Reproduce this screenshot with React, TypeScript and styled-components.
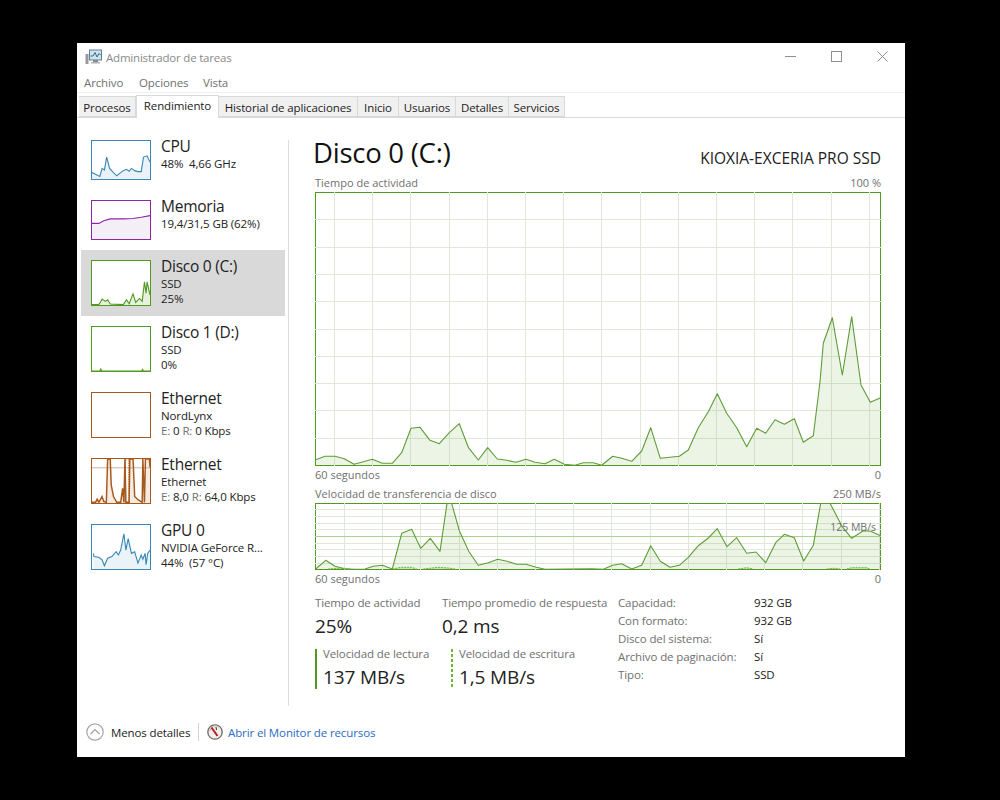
import React from "react";
import styled, { createGlobalStyle } from "styled-components";

const FONT = `"Open Sans", "Noto Sans", "Liberation Sans", sans-serif`;
const GREEN = "#4f9a1f";
const GREY = "#707070";

const Global = createGlobalStyle`
  html, body { margin: 0; padding: 0; background: #000; }
  body { font-family: ${FONT}; font-size: 11.5px; letter-spacing: -0.12px; color: #222; }
  * { box-sizing: border-box; }
`;

const Screen = styled.div`
  width: 1000px;
  height: 800px;
  padding: 43px 95px 43px 77px;
  background: #000;
`;
const Win = styled.div`
  height: 714px;
  background: #fff;
  display: flex;
  flex-direction: column;
`;
const TitleBar = styled.div`
  height: 27px;
  padding: 0 0 0 8px;
  display: flex;
  align-items: center;
  position: relative;
`;
const TitleText = styled.span`
  margin: 2px 0 0 4px;
  color: #8a8a8a;
  font-size: 11.5px;
  letter-spacing: -0.2px;
`;
const WinButtons = styled.div`
  margin-left: auto;
  display: flex;
  align-items: center;
`;
const WinButton = styled.div`
  width: 46px;
  height: 27px;
  display: flex;
  align-items: center;
  justify-content: center;
`;
const MenuBar = styled.div`
  height: 23px;
  display: flex;
  align-items: center;
  padding: 2px 0 0 7px;
  border-bottom: 1px solid #efefef;
`;
const MenuItem = styled.span<{ $w: number }>`
  width: ${(p) => p.$w}px;
  color: #707070;
  font-size: 11.5px;
`;
const TabBar = styled.div`
  height: 25px;
  padding: 3px 0 0 2px;
  display: flex;
  align-items: flex-end;
  border-bottom: 1px solid #d9d9d9;
`;
const Tab = styled.div<{ $w: number; $active?: boolean }>`
  width: ${(p) => p.$w}px;
  height: ${(p) => (p.$active ? 23 : 21)}px;
  margin-bottom: ${(p) => (p.$active ? -1 : 0)}px;
  background: ${(p) => (p.$active ? "#fff" : "#f0f0f0")};
  border: 1px solid #d9d9d9;
  border-left-width: ${(p) => (p.$active ? 1 : 0)}px;
  border-bottom: ${(p) => (p.$active ? "none" : "1px solid #d9d9d9")};
  display: flex;
  align-items: center;
  justify-content: center;
  padding-bottom: ${(p) => (p.$active ? 3 : 0)}px;
  padding-top: ${(p) => (p.$active ? 0 : 1)}px;
  font-size: 11.5px;
  color: #1c1c1c;
  white-space: nowrap;
  position: relative;
`;
const Body = styled.div`
  flex: 1;
  display: flex;
  min-height: 0;
`;
const Sidebar = styled.div`
  width: 207px;
  margin-left: 4px;
  padding-top: 12px;
  display: flex;
  flex-direction: column;
`;
const SideItem = styled.div<{ $h: number; $active?: boolean }>`
  height: ${(p) => p.$h}px;
  background: ${(p) => (p.$active ? "#d9d9d9" : "transparent")};
  width: 204px;
  padding: 10px 0 10px 10px;
  display: flex;
`;
const Spark = styled.div<{ $c: string }>`
  width: 60px;
  height: 100%;
  flex: none;
  background: #fff;
  border: 1px solid ${(p) => p.$c};
  overflow: hidden;
  svg { display: block; width: 100%; height: 100%; }
`;
const SideText = styled.div`
  margin: -4px 0 0 10px;
  min-width: 0;
`;
const SideName = styled.div`
  font-size: 15.5px;
  height: 20px;
  line-height: 21px;
  letter-spacing: -0.25px;
  color: #222;
`;
const SideSub = styled.div`
  font-size: 11.5px;
  line-height: 15px;
  color: #222;
  white-space: nowrap;
`;
const Faint = styled.span`
  color: ${GREY};
`;
const Divider = styled.div`
  width: 1px;
  height: 566px;
  margin-top: 22px;
  background: #dcdcdc;
`;
const Main = styled.div`
  flex: 1;
  padding: 17px 24px 0 24px;
  min-width: 0;
`;
const Heading = styled.div`
  height: 36px;
  display: flex;
  justify-content: space-between;
  align-items: center;
`;
const HeadTitle = styled.div`
  font-size: 27.5px;
  line-height: 38px;
  color: #111;
  letter-spacing: -0.25px;
`;
const HeadModel = styled.div`
  font-size: 15.5px;
  padding-top: 10px;
  letter-spacing: 0;
  color: #222;
`;
const AxisRow = styled.div<{ $top: number }>`
  margin-top: ${(p) => p.$top}px;
  margin-left: 2px;
  height: 14px;
  line-height: 14px;
  display: flex;
  justify-content: space-between;
  color: ${GREY};
  font-size: 11px;
  letter-spacing: 0;
`;
const Chart = styled.div<{ $h: number; $top: number }>`
  margin-left: 2px;
  margin-top: ${(p) => p.$top}px;
  height: ${(p) => p.$h}px;
  position: relative;
  border: 1px solid ${GREEN};
  svg { display: block; position: absolute; left: -1px; top: -1px; }
`;
const MidLabel = styled.span`
  position: absolute;
  right: 4px;
  top: 16px;
  color: ${GREY};
  font-size: 10.5px;
  letter-spacing: 0;
`;
const Stats = styled.div`
  margin-top: 8px;
  display: flex;
`;
const StatCols = styled.div`
  width: 305px;
  flex: none;
  padding-left: 2px;
`;
const StatRow = styled.div`
  display: grid;
  grid-template-columns: 127px 1fr;
`;
const StatWriteRow = styled(StatRow)`
  grid-template-columns: 136px 1fr;
  margin-top: 9px;
`;
const Label = styled.div`
  color: ${GREY};
  font-size: 11.5px;
  line-height: 18px;
  white-space: nowrap;
`;
const Value = styled.div`
  font-size: 19px;
  line-height: 28px;
  color: #222;
`;
const Bar = styled.div<{ $dotted?: boolean }>`
  height: 40px;
  padding-left: 8px;
  background-image: ${(p) =>
    p.$dotted
      ? "repeating-linear-gradient(to bottom, #6cb52d 0 3px, transparent 3px 5px)"
      : `linear-gradient(${GREEN}, ${GREEN})`};
  background-size: 2px 100%;
  background-repeat: no-repeat;
  ${Value} { line-height: 26px; }
  ${Label} { line-height: 12px; margin-top: -1px; margin-bottom: 4px; }
`;
const Props = styled.div`
  display: grid;
  grid-template-columns: 136px 1fr;
  grid-auto-rows: 18px;
  line-height: 18px;
`;
const PropVal = styled.div`
  font-size: 11.5px;
  color: #222;
`;
const Footer = styled.div`
  height: 50px;
  flex: none;
  display: flex;
  align-items: center;
  padding: 0 0 0 9px;
`;
const FooterText = styled.span`
  margin-left: 7px;
  font-size: 11.5px;
  color: #222;
  width: 79px;
  white-space: nowrap;
`;
const FooterSep = styled.div`
  width: 1px;
  height: 18px;
  margin: 0 8px;
  background: #d5d5d5;
`;
const FooterLink = styled.a`
  margin-left: 5px;
  font-size: 11.5px;
  color: #2a6cc4;
  white-space: nowrap;
`;

type Pt = [number, number];
const path = (p: Pt[]) => p.map(([x, y]) => `${x},${y}`).join(" ");
const scr = (ox: number, oy: number, pts: Pt[], cx: number, cy: number): Pt[] =>
  pts.map(([x, y]) => [+(ox + x / 3 - cx).toFixed(1), +(oy + y / 3 - cy).toFixed(1)]);

const active: Pt[] = [
  ...scr(300, 135, [[45,975],[75,964],[105,964],[133,971],[162,988],[190,980],[217,973],[247,985],[277,985],[305,953],[333,880],[360,877],[390,916],[418,926],[448,893],[478,866],[505,937],[535,975],[563,938],[592,972],[620,976],[648,982],[678,973],[705,982],[735,986],[763,973],[793,988],[825,991],[850,983],[880,983]], 315, 192),
  ...scr(600, 135, [[5,991],[38,964],[65,970],[95,979],[125,948],[152,878],[181,970],[210,967],[238,964],[265,945],[295,878],[325,830],[352,776],[380,835],[410,878],[440,935],[470,880],[497,895],[525,854],[553,868],[583,851],[610,922],[640,902],[660,740],[670,625],[697,548],[727,720],[755,545],[783,750],[811,802],[842,788]], 315, 192),
];
const transfer: Pt[] = [
  ...scr(305, 470, [[32,297],[62,271],[90,289],[118,296],[148,298],[180,297],[205,289],[232,286],[262,297],[290,190],[320,178],[347,235],[376,205],[405,244],[426,100],[440,100],[463,182],[492,245],[520,286],[550,278],[578,268],[606,274],[635,283],[663,283],[691,291],[720,298],[860,296],[895,298]], 315, 503),
  ...scr(600, 470, [[10,298],[38,286],[65,281],[95,297],[125,286],[152,227],[181,274],[210,292],[238,286],[265,262],[295,227],[325,204],[352,176],[381,230],[410,203],[440,250],[468,246],[497,278],[527,218],[553,193],[583,203],[611,273],[640,226],[662,100],[690,100],[727,170],[755,205],[790,182],[812,184],[842,197]], 315, 503),
];
const writes: Pt[][] = [
  scr(305, 470, [[70,297],[110,294],[135,297]], 315, 503),
  scr(305, 470, [[262,297],[290,292],[320,292],[335,297]], 315, 503),
  scr(305, 470, [[355,297],[400,292],[430,294],[450,297]], 315, 503),
  scr(600, 470, [[415,297],[440,293],[460,297]], 315, 503),
  scr(600, 470, [[680,297],[700,295],[720,297]], 315, 503),
  scr(600, 470, [[740,297],[755,293],[800,293],[810,297]], 315, 503),
];

function Grid({ w, h, xs, ys, strong }: { w: number; h: number; xs: number[]; ys: number[]; strong?: number }) {
  return (
    <g shapeRendering="crispEdges" strokeWidth={1}>
      {xs.map((x) => <line key={"x" + x} x1={x + 0.5} x2={x + 0.5} y1={0} y2={h} stroke="#e0e8da" />)}
      {ys.map((y) => <line key={"y" + y} y1={y + 0.5} y2={y + 0.5} x1={0} x2={w} stroke={y === strong ? "#add38f" : "#dfe9d6"} />)}
    </g>
  );
}

function Area({ pts, h, sw = 1.1 }: { pts: Pt[]; h: number; sw?: number }) {
  const first = pts[0];
  const last = pts[pts.length - 1];
  return (
    <>
      <polygon points={`${first[0]},${h} ${path(pts)} ${last[0]},${h}`} fill="#4f9a1f" fillOpacity={0.11} />
      <polyline points={path(pts)} fill="none" stroke="#5f9c38" strokeWidth={sw} strokeLinejoin="round" />
    </>
  );
}

const BIG_XS = Array.from({ length: 15 }, (_, k) => Math.round(19 + 38.2 * k));
const BIG_YS = Array.from({ length: 9 }, (_, k) => Math.round(27.3 * (k + 1)));
const MID_XS = Array.from({ length: 15 }, (_, k) => Math.round(29 + 38.2 * k));
const MID_YS = [6, 13, 20, 26, 33, 40, 46, 53, 60];

function BigChart() {
  return (
    <svg width={566} height={274} viewBox="0 0 566 274">
      <Grid w={566} h={274} xs={BIG_XS} ys={BIG_YS} />
      <Area pts={active} h={273} />
    </svg>
  );
}
function MidChart() {
  return (
    <svg width={566} height={67} viewBox="0 0 566 67">
      <Grid w={566} h={67} xs={MID_XS} ys={MID_YS} strong={33} />
      <Area pts={transfer} h={66} />
      {writes.map((w, i) => (
        <polyline key={i} points={path(w)} fill="#4f9a1f" fillOpacity={0.2} stroke="#6fb23f" strokeWidth={1} strokeDasharray="2 1" />
      ))}
    </svg>
  );
}

function Sparkline({ box, pts, c, fill, extra, sw = 3.4 }: { box: [number, number, number, number]; pts: Pt[]; c: string; fill: string; extra?: React.ReactNode; sw?: number }) {
  const [x0, y0, x1, y1] = box;
  return (
    <svg viewBox={`${x0} ${y0} ${x1 - x0} ${y1 - y0}`} preserveAspectRatio="none">
      {pts.length > 0 && <polygon points={`${pts[0][0]},${y1} ${path(pts)} ${pts[pts.length - 1][0]},${y1}`} fill={fill} />}
      {extra}
      {pts.length > 0 && <polyline points={path(pts)} fill="none" stroke={c} strokeWidth={sw} />}
    </svg>
  );
}

const BLUE = "#3a87b5";
const PURPLE = "#8e24a8";
const ORANGE = "#a7591c";
const cpu: Pt[] = [[34,128],[45,133],[58,140],[65,115],[72,120],[79,80],[88,115],[100,128],[110,138],[122,128],[130,122],[140,118],[148,124],[155,115],[165,122],[175,125],[185,125],[192,80],[203,76],[212,95]];
const mem: Pt[] = [[34,280],[55,280],[70,272],[90,266],[130,266],[160,265],[185,261],[212,256]];
const d0: Pt[] = [[34,525],[55,525],[65,508],[75,515],[82,510],[90,523],[130,525],[140,510],[148,522],[160,492],[168,518],[180,506],[188,515],[195,455],[200,490],[203,455],[212,495]];
const d1: Pt[] = [[34,155],[58,155],[61,149],[64,155],[186,155],[189,150],[192,155],[212,155]];
const eth: Pt[] = [[34,548],[45,548],[50,538],[55,548],[65,530],[70,545],[78,548],[82,415],[90,415],[93,495],[100,530],[110,548],[122,548],[128,505],[132,548],[135,415],[138,548],[148,548],[150,415],[160,415],[165,530],[175,540],[188,548],[190,415],[195,548],[198,415],[210,415],[212,440]];
const ethFaint: Pt[] = [[137,548],[137,415],[147,415],[147,548]];
const gpu: Pt[] = [[38,700],[40,710],[55,712],[65,720],[72,738],[82,715],[95,710],[108,695],[115,705],[122,690],[132,640],[138,690],[145,655],[155,700],[165,695],[175,730],[185,705],[190,718],[197,700],[200,735],[205,700],[212,690]];

function AppIcon() {
  return (
    <svg width={17} height={17} viewBox="0 0 17 17">
      <rect x="0.5" y="6" width="3" height="10" fill="#9a9a9a" />
      <rect x="4.5" y="2" width="12" height="10" fill="#cfe3ef" stroke="#5f7f95" />
      <polyline points="5.5,8 8,8 10,4.5 12,9 14,5.5 15.5,7" fill="none" stroke="#35688a" strokeWidth="1" />
      <rect x="8" y="12" width="5" height="2" fill="#8a8a8a" />
      <rect x="6" y="14" width="9" height="1.5" fill="#b3b3b3" />
    </svg>
  );
}
function Chevron() {
  return (
    <svg width={18} height={18} viewBox="0 0 18 18">
      <circle cx="9" cy="9" r="8.2" fill="#fff" stroke="#a6a6a6" strokeWidth="1.2" />
      <polyline points="4.5,11 9,6.5 13.5,11" fill="none" stroke="#a0a0a0" strokeWidth="1.2" />
    </svg>
  );
}
function Gauge() {
  return (
    <svg width={16} height={16} viewBox="0 0 16 16">
      <circle cx="8" cy="8" r="7.2" fill="#f4efe9" stroke="#6a6a6a" strokeWidth="1.3" />
      <path d="M3 7 A5.5 5.5 0 0 1 12 3" fill="none" stroke="#c9b9a5" strokeWidth="1" />
      <line x1="4.5" y1="3.5" x2="10.5" y2="12" stroke="#b3202a" strokeWidth="2" />
      <line x1="9" y1="3" x2="9.5" y2="6" stroke="#333" strokeWidth="1" />
    </svg>
  );
}

export default function App() {
  return (
    <Screen>
      <Global />
      <Win>
        <TitleBar>
          <AppIcon />
          <TitleText>Administrador de tareas</TitleText>
          <WinButtons>
            <WinButton>
              <svg width={11} height={11} viewBox="0 0 11 11"><line x1="0" x2="11" y1="5.5" y2="5.5" stroke="#8f8f8f" /></svg>
            </WinButton>
            <WinButton>
              <svg width={11} height={11} viewBox="0 0 11 11"><rect x="0.5" y="0.5" width="10" height="10" fill="none" stroke="#8f8f8f" /></svg>
            </WinButton>
            <WinButton>
              <svg width={11} height={11} viewBox="0 0 11 11"><path d="M0.5 0.5L10.5 10.5M10.5 0.5L0.5 10.5" stroke="#8f8f8f" fill="none" /></svg>
            </WinButton>
          </WinButtons>
        </TitleBar>
        <MenuBar>
          <MenuItem $w={55}>Archivo</MenuItem>
          <MenuItem $w={64}>Opciones</MenuItem>
          <MenuItem $w={40}>Vista</MenuItem>
        </MenuBar>
        <TabBar>
          <Tab $w={57}>Procesos</Tab>
          <Tab $w={83} $active>Rendimiento</Tab>
          <Tab $w={139}>Historial de aplicaciones</Tab>
          <Tab $w={41}>Inicio</Tab>
          <Tab $w={57}>Usuarios</Tab>
          <Tab $w={53}>Detalles</Tab>
          <Tab $w={56}>Servicios</Tab>
        </TabBar>
        <Body>
          <Sidebar>
            <SideItem $h={60}>
              <Spark $c={BLUE}><Sparkline box={[34,30,212,148]} pts={cpu} c={BLUE} fill="#e9f2f8" /></Spark>
              <SideText><SideName>CPU</SideName><SideSub>48%&nbsp; 4,66 GHz</SideSub></SideText>
            </SideItem>
            <SideItem $h={60}>
              <Spark $c={PURPLE}><Sparkline box={[34,211,212,328]} pts={mem} c={PURPLE} fill="#f4eff6" /></Spark>
              <SideText><SideName>Memoria</SideName><SideSub>19,4/31,5 GB (62%)</SideSub></SideText>
            </SideItem>
            <SideItem $h={66} $active>
              <Spark $c={GREEN}><Sparkline box={[34,391,212,526]} pts={d0} c={GREEN} fill="#e6f2dd" /></Spark>
              <SideText><SideName>Disco 0 (C:)</SideName><SideSub>SSD</SideSub><SideSub>25%</SideSub></SideText>
            </SideItem>
            <SideItem $h={66}>
              <Spark $c={GREEN}><Sparkline box={[34,19,212,155]} pts={d1} c={GREEN} fill="#e6f2dd" /></Spark>
              <SideText><SideName>Disco 1 (D:)</SideName><SideSub>SSD</SideSub><SideSub>0%</SideSub></SideText>
            </SideItem>
            <SideItem $h={66}>
              <Spark $c={ORANGE}><Sparkline box={[34,217,212,353]} pts={[]} c={ORANGE} fill="#fff" /></Spark>
              <SideText><SideName>Ethernet</SideName><SideSub>NordLynx</SideSub><SideSub><Faint>E:</Faint> 0 <Faint>R:</Faint> 0 Kbps</SideSub></SideText>
            </SideItem>
            <SideItem $h={66}>
              <Spark $c={ORANGE}>
                <Sparkline
                  box={[34,415,212,550]}
                  pts={eth}
                  c={ORANGE}
                  fill="#f7ece4"
                  sw={4.5}
                  extra={
                    <>
                      <line x1="34" x2="212" y1="442" y2="442" stroke="#b98a66" strokeWidth="2" />
                      <polyline points={path(ethFaint)} fill="none" stroke={ORANGE} strokeWidth="3" strokeDasharray="4 3" />
                    </>
                  }
                />
              </Spark>
              <SideText><SideName>Ethernet</SideName><SideSub>Ethernet</SideSub><SideSub><Faint>E:</Faint> 8,0 <Faint>R:</Faint> 64,0 Kbps</SideSub></SideText>
            </SideItem>
            <SideItem $h={66}>
              <Spark $c={BLUE}><Sparkline box={[34,613,212,748]} pts={gpu} c={BLUE} fill="#eaf3f8" /></Spark>
              <SideText><SideName>GPU 0</SideName><SideSub>NVIDIA GeForce R...</SideSub><SideSub>44%&nbsp; (57 °C)</SideSub></SideText>
            </SideItem>
          </Sidebar>
          <Divider />
          <Main>
            <Heading>
              <HeadTitle>Disco 0 (C:)</HeadTitle>
              <HeadModel>KIOXIA-EXCERIA PRO SSD</HeadModel>
            </Heading>
            <AxisRow $top={5}><span>Tiempo de actividad</span><span>100 %</span></AxisRow>
            <Chart $top={2} $h={274}><BigChart /></Chart>
            <AxisRow $top={2}><span>60 segundos</span><span>0</span></AxisRow>
            <AxisRow $top={5}><span>Velocidad de transferencia de disco</span><span>250 MB/s</span></AxisRow>
            <Chart $top={2} $h={67}><MidChart /><MidLabel>125 MB/s</MidLabel></Chart>
            <AxisRow $top={2}><span>60 segundos</span><span>0</span></AxisRow>
            <Stats>
              <StatCols>
                <StatRow>
                  <div><Label>Tiempo de actividad</Label><Value>25%</Value></div>
                  <div><Label>Tiempo promedio de respuesta</Label><Value>0,2 ms</Value></div>
                </StatRow>
                <StatWriteRow>
                  <Bar><Label>Velocidad de lectura</Label><Value>137 MB/s</Value></Bar>
                  <Bar $dotted><Label>Velocidad de escritura</Label><Value>1,5 MB/s</Value></Bar>
                </StatWriteRow>
              </StatCols>
              <Props>
                <Label>Capacidad:</Label><PropVal>932 GB</PropVal>
                <Label>Con formato:</Label><PropVal>932 GB</PropVal>
                <Label>Disco del sistema:</Label><PropVal>Sí</PropVal>
                <Label>Archivo de paginación:</Label><PropVal>Sí</PropVal>
                <Label>Tipo:</Label><PropVal>SSD</PropVal>
              </Props>
            </Stats>
          </Main>
        </Body>
        <Footer>
          <Chevron />
          <FooterText>Menos detalles</FooterText>
          <FooterSep />
          <Gauge />
          <FooterLink>Abrir el Monitor de recursos</FooterLink>
        </Footer>
      </Win>
    </Screen>
  );
}
